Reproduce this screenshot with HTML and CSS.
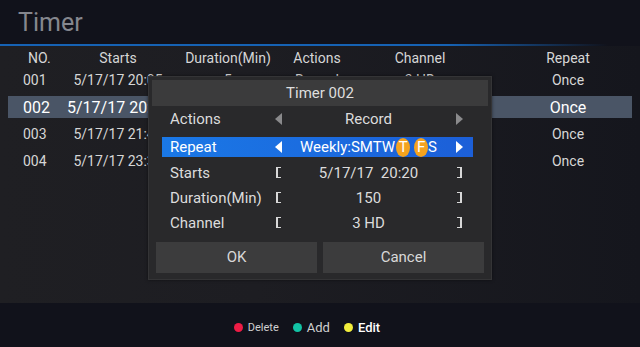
FILE: index.html
```html
<!DOCTYPE html>
<html>
<head>
<meta charset="utf-8">
<title>Timer</title>
<link rel="stylesheet" href="styles.css">
</head>
<body>
  <div class="screen">
    <h1 class="title">Timer</h1>
    <div class="rule"></div>

    <div class="table">
      <div class="row head">
        <span>NO.</span><span>Starts</span><span>Duration(Min)</span><span>Actions</span><span>Channel</span><span class="last">Repeat</span>
      </div>
      <div class="rows">
        <div class="row">
          <span>001</span><span>5/17/17 20:05</span><span>5</span><span>Record</span><span>3 HD</span><span class="last">Once</span>
        </div>
        <div class="row selected">
          <span>002</span><span>5/17/17 20:20</span><span>150</span><span>Record</span><span>3 HD</span><span class="last">Once</span>
        </div>
        <div class="row">
          <span>003</span><span>5/17/17 21:45</span><span>30</span><span>Record</span><span>5 HD</span><span class="last">Once</span>
        </div>
        <div class="row">
          <span>004</span><span>5/17/17 23:30</span><span>60</span><span>Record</span><span>7 HD</span><span class="last">Once</span>
        </div>
      </div>

      <div class="dialog">
        <div class="dialog-title">Timer 002</div>
        <div class="field">
          <span class="label">Actions</span>
          <span class="tri left dim"></span>
          <span class="value">Record</span>
          <span class="tri right dim"></span>
        </div>
        <div class="field focus">
          <span class="label">Repeat</span>
          <span class="tri left"></span>
          <span class="value">Weekly:SMTW<b class="day">T</b><b class="day">F</b>S</span>
          <span class="tri right"></span>
        </div>
        <div class="field">
          <span class="label">Starts</span>
          <span class="bracket open"></span>
          <span class="value">5/17/17&nbsp;&nbsp;20:20</span>
          <span class="bracket close"></span>
        </div>
        <div class="field">
          <span class="label">Duration(Min)</span>
          <span class="bracket open"></span>
          <span class="value">150</span>
          <span class="bracket close"></span>
        </div>
        <div class="field">
          <span class="label">Channel</span>
          <span class="bracket open"></span>
          <span class="value">3 HD</span>
          <span class="bracket close"></span>
        </div>
        <div class="buttons">
          <div class="btn">OK</div>
          <div class="btn">Cancel</div>
        </div>
      </div>
    </div>

    <div class="legend">
      <span class="dot red"></span><span class="key small">Delete</span>
      <span class="dot teal"></span><span class="key">Add</span>
      <span class="dot yellow"></span><span class="key bright">Edit</span>
    </div>
  </div>
</body>
</html>
```

FILE: styles.css
```css
body {
  margin: 0;
  background: #11121b;
  font-family: Roboto, "Liberation Sans", sans-serif;
  color: #d6d6d6;
}

.screen {
  width: 640px;
  height: 347px;
  overflow: hidden;
}

.title {
  margin: 0;
  height: 44px;
  padding-left: 18px;
  font-size: 25px;
  font-weight: normal;
  line-height: 46px;
  color: #85878e;
}

.rule {
  height: 2px;
  background: linear-gradient(to right, #1662b4 0%, #1662b4 70%, #11121b 95%);
}

.table {
  position: relative;
  height: 257px;
  padding: 1px 8px 0;
  background: linear-gradient(to right, #1f1f23 0%, #1d1d22 40%, #15161d 100%);
  box-sizing: border-box;
}

.row {
  display: grid;
  grid-template-columns: 56px 108px 112px 66px 140px 1fr;
  height: 22px;
  align-items: center;
  font-size: 14px;
  text-align: center;
  white-space: nowrap;
}

.row .last {
  padding-left: 14px;
}

.row span:first-child {
  text-align: left;
  padding-left: 15px;
}

.row.head span:first-child {
  padding-left: 20px;
}

.rows {
  display: flex;
  flex-direction: column;
  gap: 5px;
}

.row.selected {
  background: #4a5566;
  color: #fff;
  font-size: 16px;
}

.dialog {
  position: absolute;
  left: 148px;
  top: 30px;
  width: 344px;
  height: 204px;
  box-sizing: border-box;
  padding: 3px 3px 0;
  background: #29292b;
  border: 1px solid #343436;
  box-shadow: 0 0 3px rgba(0, 0, 0, 0.5);
}

.dialog-title {
  height: 26px;
  line-height: 27px;
  background: #3b3b3c;
  text-align: center;
  font-size: 15px;
  color: #dedede;
}

.field {
  display: grid;
  grid-template-columns: 108px 16px 1fr 16px;
  margin: 0 15px 0 10px;
  padding-right: 6px;
  height: 25px;
  align-items: center;
  font-size: 15px;
  color: #dcdcdc;
}

.field .label {
  padding-left: 8px;
}

.field .value {
  text-align: center;
  white-space: nowrap;
}

.field.focus {
  height: 20px;
  margin-top: 6px;
  margin-bottom: 3px;
  background: linear-gradient(to right, #1a78e6, #1c5fd8);
  color: #fff;
}

.day {
  display: inline-block;
  width: 14px;
  height: 19px;
  margin-left: 1px;
  line-height: 19px;
  border-radius: 50%;
  background: #f5a31e;
  text-align: center;
  font-weight: normal;
  color: #fff;
  vertical-align: top;
}

.day + .day {
  margin-left: 4px;
}

.tri {
  width: 0;
  height: 0;
  justify-self: center;
  border-top: 6px solid transparent;
  border-bottom: 6px solid transparent;
}

.tri.left {
  border-right: 7px solid #fff;
}

.tri.right {
  border-left: 7px solid #fff;
}

.tri.left.dim {
  border-right-color: #8a8a8c;
}

.tri.right.dim {
  border-left-color: #8a8a8c;
}

.bracket {
  width: 3px;
  height: 9px;
  justify-self: center;
  border: 2px solid #d8d8d8;
  border-top-width: 1px;
  border-bottom-width: 1px;
}

.bracket.open {
  border-right: none;
}

.bracket.close {
  border-left: none;
}

.buttons {
  display: flex;
  gap: 6px;
  margin: 7px 4px 0;
}

.btn {
  flex: 1;
  height: 31px;
  line-height: 31px;
  text-align: center;
  background: #3c3c3d;
  font-size: 15px;
  color: #d8d8d8;
}

.legend {
  display: flex;
  justify-content: center;
  align-items: center;
  height: 44px;
  padding: 4px 26px 0 0;
  box-sizing: border-box;
  font-size: 13px;
}

.dot {
  width: 9px;
  height: 9px;
  border-radius: 50%;
  margin-right: 5px;
}

.dot.red { background: #ee1c45; }
.dot.teal { background: #12c3a5; }
.dot.yellow { background: #f2ee3c; }

.key {
  margin-right: 14px;
  color: #d0d0d0;
}

.key.small {
  font-size: 11px;
}

.key.bright {
  color: #fff;
  font-weight: 500;
  margin-right: 0;
}
```
